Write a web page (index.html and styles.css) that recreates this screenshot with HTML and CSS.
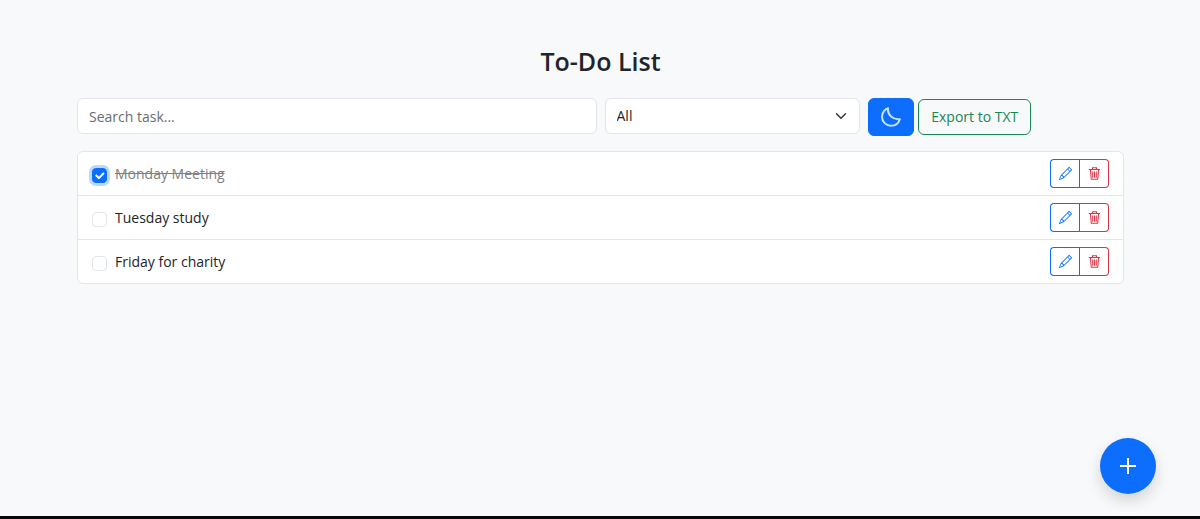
FILE: index.html
```html
<!DOCTYPE html>
<html lang="en">

<head>
  <meta charset="UTF-8">
  <meta name="viewport" content="width=device-width, initial-scale=1.0">
  <title>To-Do List</title>
  <link rel="stylesheet" href="styles.css">
</head>

<body>
  <!-- shared icons -->
  <svg class="sprite" aria-hidden="true">
    <symbol id="pencil" viewBox="0 0 16 16">
      <path d="M12.146.146a.5.5 0 0 1 .708 0l3 3a.5.5 0 0 1 0 .708l-10 10a.5.5 0 0 1-.168.11l-5 2a.5.5 0 0 1-.65-.65l2-5a.5.5 0 0 1 .11-.168zM11.207 2.5 13.5 4.793 14.793 3.5 12.5 1.207zm1.586 3L10.5 3.207 4 9.707V10h.5a.5.5 0 0 1 .5.5v.5h.5a.5.5 0 0 1 .5.5v.5h.293zm-9.761 5.175-.106.106-1.528 3.821 3.821-1.528.106-.106A.5.5 0 0 1 5 12.5V12h-.5a.5.5 0 0 1-.5-.5V11h-.5a.5.5 0 0 1-.468-.325" />
    </symbol>
    <symbol id="trash" viewBox="0 0 16 16">
      <path d="M5.500 3V1H10.500V3M1.500 3H14.500M3 3.500L4 15H12L13 3.500M5.800 6V12.500M8 6V12.500M10.200 6V12.500" fill="none" stroke="currentColor" stroke-width="1.300" stroke-linecap="round" stroke-linejoin="round" />
    </symbol>
  </svg>

  <main class="container">
    <h1 class="title">To-Do List</h1>

    <div class="toolbar">
      <input type="text" class="control search" placeholder="Search task..." aria-label="Search task">
      <select class="control filter" aria-label="Filter tasks">
        <option>All</option>
        <option>Completed</option>
        <option>Pending</option>
      </select>
      <div class="actions">
        <button type="button" class="btn theme-btn" aria-label="Toggle dark mode">
          <svg class="moon" viewBox="0 0 20 20" aria-hidden="true">
            <path d="M7 1.200C4.200 2.100 1 5.400 1 9.800C1 14.800 5.100 18.700 10 18.700C14.200 18.700 17.700 16 18.800 12.200C12.500 13.200 6.200 8 7 1.200Z" />
          </svg>
        </button>
        <button type="button" class="btn export-btn">Export to TXT</button>
      </div>
    </div>

    <ul class="task-list">
      <li class="task done">
        <input type="checkbox" class="check" id="task1" checked>
        <label for="task1">Monday Meeting</label>
        <div class="btn-group">
          <button type="button" class="icon-btn edit" aria-label="Edit"><svg><use href="#pencil" /></svg></button>
          <button type="button" class="icon-btn delete" aria-label="Delete"><svg><use href="#trash" /></svg></button>
        </div>
      </li>
      <li class="task">
        <input type="checkbox" class="check" id="task2">
        <label for="task2">Tuesday study</label>
        <div class="btn-group">
          <button type="button" class="icon-btn edit" aria-label="Edit"><svg><use href="#pencil" /></svg></button>
          <button type="button" class="icon-btn delete" aria-label="Delete"><svg><use href="#trash" /></svg></button>
        </div>
      </li>
      <li class="task">
        <input type="checkbox" class="check" id="task3">
        <label for="task3">Friday for charity</label>
        <div class="btn-group">
          <button type="button" class="icon-btn edit" aria-label="Edit"><svg><use href="#pencil" /></svg></button>
          <button type="button" class="icon-btn delete" aria-label="Delete"><svg><use href="#trash" /></svg></button>
        </div>
      </li>
    </ul>
  </main>

  <button type="button" class="fab" aria-label="Add task">
    <svg viewBox="0 0 16 16" aria-hidden="true"><path d="M8 0v16M0 8h16" /></svg>
  </button>

  <footer class="bottom-bar"></footer>
</body>

</html>
```
FILE: styles.css
```css
:root {
  --primary: #0d6efd;
  --success: #198754;
  --danger: #dc3545;
  --border: #e2e5e9;
  --text: #212529;
}

* {
  box-sizing: border-box;
}

body {
  display: flex;
  flex-direction: column;
  min-height: 100vh;
  margin: 0;
  background: #f8f9fb;
  color: var(--text);
  font-family: "Open Sans", "Noto Sans", sans-serif;
  font-size: 14px;
  line-height: 22px;
}

input,
select,
button {
  font: inherit;
}

button {
  cursor: pointer;
}

.sprite {
  position: absolute;
  width: 0;
  height: 0;
}

.container {
  flex: 1;
  padding: 45px 76px 0 77px;
}

.title {
  margin: 0 0 21px;
  font-size: 25px;
  font-weight: 600;
  line-height: 32px;
  text-align: center;
}

/* search, filter and buttons */
.toolbar {
  display: grid;
  grid-template-columns: repeat(4, 1fr);
  align-items: start;
  gap: 8px;
  margin-bottom: 15px;
}

.control {
  width: 100%;
  height: 36px;
  padding: 0 11px;
  border: 1px solid var(--border);
  border-radius: 6px;
  background-color: #fff;
  color: var(--text);
}

.search {
  grid-column: span 2;
}

.search::placeholder {
  color: #6a6d70;
  opacity: 1;
}

.filter {
  appearance: none;
  background-image: url("data:image/svg+xml,%3Csvg xmlns='http://www.w3.org/2000/svg' viewBox='0 0 16 16'%3E%3Cpath fill='none' stroke='%23343a40' stroke-linecap='round' stroke-linejoin='round' stroke-width='2' d='m2 5 6 6 6-6'/%3E%3C/svg%3E");
  background-repeat: no-repeat;
  background-position: right 11px center;
  background-size: 14px 12px;
}

.actions {
  display: flex;
  align-items: center;
  gap: 4px;
}

.btn {
  border: 1px solid var(--primary);
  border-radius: 6px;
  white-space: nowrap;
}

.theme-btn {
  display: flex;
  align-items: center;
  justify-content: center;
  width: 46px;
  height: 38px;
  padding: 0;
  background: var(--primary);
}

.moon {
  width: 20px;
  height: 20px;
  fill: none;
  stroke: #c5e3ff;
  stroke-width: 2;
  stroke-linejoin: round;
}

.export-btn {
  height: 36px;
  padding: 0 12px;
  border-color: var(--success);
  background: transparent;
  color: var(--success);
}

/* tasks */
.task-list {
  margin: 0;
  padding: 0;
  border: 1px solid var(--border);
  border-radius: 6px;
  background: #fff;
  list-style: none;
}

.task {
  display: flex;
  align-items: center;
  padding: 7px 14px;
}

.task + .task {
  border-top: 1px solid var(--border);
}

.task label {
  flex: 1;
  margin-left: 8px;
}

.done label {
  color: #808080;
  text-decoration: line-through;
}

.check {
  appearance: none;
  width: 15px;
  height: 15px;
  margin: 3px 0 0;
  border: 1px solid var(--border);
  border-radius: 4px;
  background: #fff;
}

.check:checked {
  border-color: var(--primary);
  background: var(--primary) url("data:image/svg+xml,%3Csvg xmlns='http://www.w3.org/2000/svg' viewBox='0 0 20 20'%3E%3Cpath fill='none' stroke='%23fff' stroke-linecap='round' stroke-linejoin='round' stroke-width='3' d='m5 10 4 4 7-7'/%3E%3C/svg%3E") center / contain no-repeat;
  box-shadow: 0 0 0 3px #bcd9fb;
}

.btn-group {
  display: flex;
}

.icon-btn {
  display: flex;
  align-items: center;
  justify-content: center;
  width: 30px;
  height: 29px;
  padding: 0;
  border: 1px solid;
  background: transparent;
}

.icon-btn svg {
  width: 13px;
  height: 13px;
  fill: currentColor;
}

.edit {
  border-radius: 4px 0 0 4px;
  border-right-color: #6a4fa3;
  color: var(--primary);
}

.delete {
  margin-left: -1px;
  border-radius: 0 4px 4px 0;
  border-left-color: #6a4fa3;
  color: var(--danger);
}

/* add button */
.fab {
  display: flex;
  align-items: center;
  justify-content: center;
  position: fixed;
  right: 44px;
  bottom: 25px;
  width: 56px;
  height: 56px;
  padding: 0;
  border: 0;
  border-radius: 50%;
  background: var(--primary);
  box-shadow: 0 7px 15px rgba(0, 0, 0, .15);
}

.fab svg {
  width: 16px;
  height: 16px;
  stroke: #fff;
  stroke-width: 2;
}

.bottom-bar {
  height: 3px;
  background: #080608;
}
```
